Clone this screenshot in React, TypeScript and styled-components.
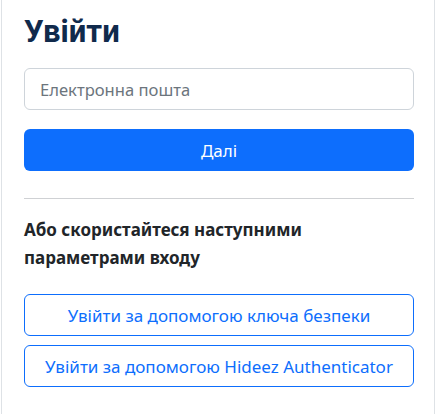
import React from "react";
import styled, { createGlobalStyle } from "styled-components";

const Global = createGlobalStyle`
  html, body { margin: 0; padding: 0; background: #fff; }
  body { font-family: "Noto Sans", "Open Sans", sans-serif; }
  * { box-sizing: border-box; }
`;

const Card = styled.div`
  margin-left: 1px;
  width: 434px;
  min-height: 414px;
  border-left: 1px solid #dee2e6;
  border-right: 1px solid #dee2e6;
  padding: 12px 20px 20px 22px;
  display: flex;
  flex-direction: column;
`;

const Title = styled.h2`
  margin: 0 0 17px;
  font-family: Roboto, "Noto Sans", sans-serif;
  font-size: 31px;
  font-weight: 700;
  line-height: 39px;
  color: #102a4c;
`;

const Input = styled.input`
  width: 390px;
  height: 42px;
  border: 1px solid #ced4da;
  border-radius: 6px;
  padding: 0 15px;
  font-family: inherit;
  font-size: 16.6px;
  color: #212529;
  outline: none;
  &::placeholder { color: #6c757d; }
`;

const Primary = styled.button`
  margin-top: 19px;
  width: 390px;
  height: 42px;
  border: 0;
  border-radius: 6px;
  background: #0d6efd;
  color: #fff;
  font-family: inherit;
  font-size: 17px;
  cursor: pointer;
`;

const Rule = styled.hr`
  width: 390px;
  margin: 27px 0 0;
  border: 0;
  border-top: 1px solid #cfd1d4;
`;

const Subtitle = styled.div`
  margin: 17px 0 0;
  font-size: 17px;
  font-weight: 700;
  line-height: 28px;
  color: #212529;
`;

const Options = styled.div`
  margin-top: 22px;
  display: flex;
  flex-direction: column;
  gap: 9px;
`;

const Outline = styled.button`
  width: 390px;
  height: 42px;
  border: 1px solid #0d6efd;
  border-radius: 6px;
  background: #fff;
  color: #0d6efd;
  font-family: inherit;
  font-size: 17px;
  cursor: pointer;
`;

export default function App() {
  return (
    <>
      <Global />
      <Card>
        <Title>Увійти</Title>
        <Input placeholder="Електронна пошта" />
        <Primary>Далі</Primary>
        <Rule />
        <Subtitle>
          Або скористайтеся наступними
          <br />
          параметрами входу
        </Subtitle>
        <Options>
          <Outline>Увійти за допомогою ключа безпеки</Outline>
          <Outline>Увійти за допомогою Hideez Authenticator</Outline>
        </Options>
      </Card>
    </>
  );
}
